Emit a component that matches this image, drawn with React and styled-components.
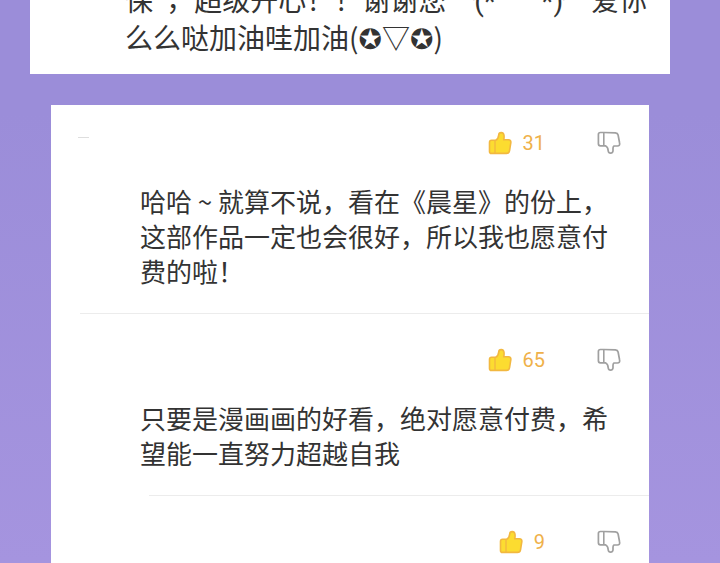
import { useState } from 'react';
import styled, { createGlobalStyle } from 'styled-components';

const comments = [
    {
        id: 1,
        likes: 31,
        text: '哈哈 ~ 就算不说，看在《晨星》的份上，这部作品一定也会很好，所以我也愿意付费的啦！',
        line: 'wide',
        marked: true,
    },
    {
        id: 2,
        likes: 65,
        text: '只要是漫画画的好看，绝对愿意付费，希望能一直努力超越自我',
        line: 'short',
    },
    { id: 3, likes: 9, text: '' },
];

const LikeIcon = () => (
    <svg width='24' height='24' viewBox='0 0 24 24' aria-hidden='true'>
        <path
            d='M3.5 9.3h4.2c2.1-1.1 2.8-2.8 3-5.2.2-3.2 4.6-3.4 5.2-.2.3 1.7.2 3.4-.2 4.9h4.6c1.9 0 2.8 1.2 2.5 3l-1.3 8c-.3 1.7-1.3 2.6-3 2.6H3.5c-1.4 0-2-.7-2-2v-9c0-1.4.6-2.1 2-2.1z'
            fill='#fcdc30'
            stroke='#f2b840'
            strokeWidth='1.6'
            strokeLinejoin='round'
        />
        <path d='M7 10v12' stroke='#f2b840' strokeWidth='1.4' />
    </svg>
);

const DislikeIcon = () => (
    <svg width='24' height='24' viewBox='0 0 24 24' aria-hidden='true'>
        <path
            d='M3.4 1.5h3.4l11.6.3c1.6.1 2.4.8 2.7 2.2l1.5 8c.4 1.9-.4 3-2.2 3H17c-.8.5-1 1.300-1 2.300v2.500c-.4 3-4.400 3-4.800 0-.1-2.400-1-4.200-2.800-5h-5c-1.300 0-2-.7-2-2V3.500c0-1.300.7-2 2-2z'
            fill='none'
            stroke='#a0a0a0'
            strokeWidth='1.7'
            strokeLinejoin='round'
        />
        <path d='M6.8 2v12.4' stroke='#a0a0a0' strokeWidth='1.6' />
    </svg>
);

const Comment = ({ likes, text, line, marked }) => {
    const [liked, setLiked] = useState(true);

    return (
        <CommentItem>
            <Actions>
                {marked && <Mark />}
                <LikeBtn
                    type='button'
                    aria-pressed={liked}
                    onClick={() => setLiked(!liked)}
                >
                    <LikeIcon />
                    <Count>{liked ? likes : likes - 1}</Count>
                </LikeBtn>
                <IconBtn type='button' aria-label='踩'>
                    <DislikeIcon />
                </IconBtn>
            </Actions>
            {text && <CommentText>{text}</CommentText>}
            {line && <Divider $short={line === 'short'} />}
        </CommentItem>
    );
};

const App = () => {
    return (
        <>
            <GlobalStyle />
            <Page>
                <PrevCard>
                    <PrevText>
                        保"，超级开心！！谢谢您<Face>╰(*´︶`*)╯</Face>爱你
                        <br />
                        么么哒加油哇加油(✪▽✪)
                    </PrevText>
                </PrevCard>
                <CommentList>
                    {comments.map((c) => (
                        <Comment key={c.id} {...c} />
                    ))}
                </CommentList>
            </Page>
        </>
    );
};

const GlobalStyle = createGlobalStyle`
    body {
        margin: 0;
        color: #333;
        font-family: 'Noto Sans CJK SC', 'DejaVu Sans', sans-serif;
    }
`;

const Page = styled.main`
    display: flex;
    flex-direction: column;
    height: 100vh;
    overflow: hidden;
    background: linear-gradient(#9b8dd9 20%, #a594df);
`;

/* scrolled partly out of view */
const PrevCard = styled.article`
    flex-shrink: 0;
    margin: -20px 50px 0 30px;
    padding: 0 0 18px 95px;
    background: #fff;
`;

const PrevText = styled.p`
    margin: 0;
    font-size: 28px;
    line-height: 38px;
    white-space: nowrap;
`;

const Face = styled.span`
    font-family: Roboto, 'Noto Sans CJK SC', sans-serif;
    line-height: 1;
`;

const CommentList = styled.ul`
    flex: 1 0 auto;
    margin: 31px 71px 0 51px;
    padding: 0;
    list-style: none;
    background: #fff;
`;

const CommentItem = styled.li`
    padding-top: 34px;

    &:first-child {
        padding-top: 26px;
    }
`;

const Actions = styled.div`
    display: flex;
    justify-content: flex-end;
    align-items: center;
    height: 24px;
    padding: 0 28px 0 27px;
`;

const Mark = styled.span`
    align-self: flex-start;
    width: 11px;
    height: 1px;
    margin: 6px auto 0 0;
    background: #dedede;
`;

const IconBtn = styled.button`
    display: flex;
    align-items: center;
    padding: 0;
    border: none;
    background: none;
    cursor: pointer;
`;

const LikeBtn = styled(IconBtn)`
    gap: 11px;
    margin-right: 52px;
`;

const Count = styled.span`
    color: #efb14a;
    font-family: Roboto, sans-serif;
    font-size: 20px;
    line-height: 24px;
`;

const CommentText = styled.p`
    margin: 28px 28px 0 89px;
    font-size: 26px;
    line-height: 35px;
`;

const Divider = styled.hr`
    height: 1px;
    margin: 25px 0 0 ${(props) => (props.$short ? '98px' : '29px')};
    border: none;
    background: #ececec;
`;

export default App;
